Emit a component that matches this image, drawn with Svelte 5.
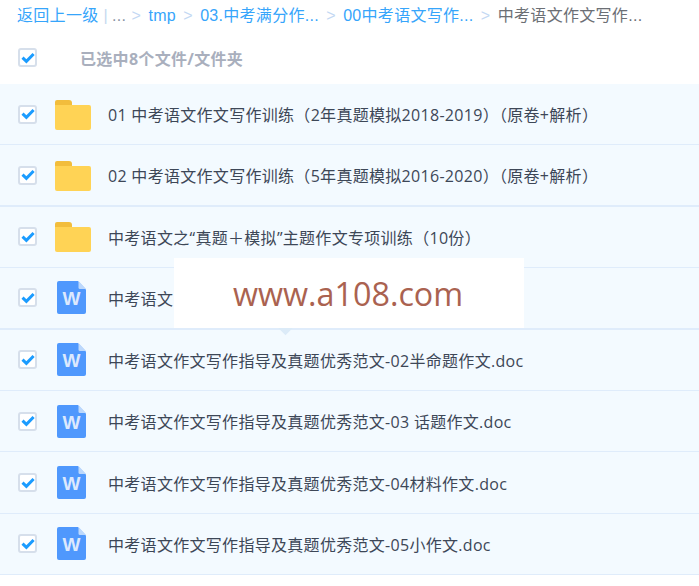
<script>
  const folder = 'folder', doc = 'doc';
  const rows = [
    { type: folder, name: '01 中考语文作文写作训练（2年真题模拟2018-2019）（原卷+解析）' },
    { type: folder, name: '02 中考语文作文写作训练（5年真题模拟2016-2020）（原卷+解析）' },
    { type: folder, name: '中考语文之“真题＋模拟”主题作文专项训练（10份）' },
    { type: doc, name: '中考语文' },
    { type: doc, name: '中考语文作文写作指导及真题优秀范文-02半命题作文.doc' },
    { type: doc, name: '中考语文作文写作指导及真题优秀范文-03 话题作文.doc' },
    { type: doc, name: '中考语文作文写作指导及真题优秀范文-04材料作文.doc' },
    { type: doc, name: '中考语文作文写作指导及真题优秀范文-05小作文.doc' }
  ];
  const crumbs = ['tmp', '03.中考满分作...', '00中考语文写作...'];
</script>

{#snippet check()}
  <span class="check">
    <svg width="14" height="12" viewBox="0 0 14 12"><path d="M1.500 5.600 5.400 9.400 12.600 2" fill="none" stroke="#1b9cff" stroke-width="3"/></svg>
  </span>
{/snippet}

<div class="page">
  <nav class="crumbs">
    <span class="link">返回上一级</span>
    <span class="bar">|</span>
    <span class="dots">...</span>
    {#each crumbs as c}
      <span class="sep">&gt;</span>
      <span class="link">{c}</span>
    {/each}
    <span class="sep">&gt;</span>
    <span class="current">中考语文作文写作...</span>
  </nav>

  <div class="selected">
    {@render check()}
    <span class="count">已选中8个文件/文件夹</span>
  </div>

  <ul class="list">
    {#each rows as r}
      <li class="row">
        {@render check()}
        <span class="icon">
          {#if r.type === folder}
            <svg width="36" height="31" viewBox="0 0 36 31">
              <path d="M0 3a2 2 0 0 1 2-2h12a3 3 0 0 1 3 3v3H0z" fill="#f2bd3c"/>
              <path d="M0 6h34a2 2 0 0 1 2 2v21a2 2 0 0 1-2 2H2a2 2 0 0 1-2-2z" fill="#ffd355"/>
            </svg>
          {:else}
            <svg class="docicon" width="29" height="33" viewBox="0 0 29 33">
              <path d="M2 0h19l8 8.500v22.500a2 2 0 0 1-2 2H2a2 2 0 0 1-2-2V2a2 2 0 0 1 2-2z" fill="#4f98fd"/>
              <path d="M21.500 0 29 8h-6a1.500 1.500 0 0 1-1.500-1.500z" fill="#bcd8fc"/>
              <text x="14.500" y="24" text-anchor="middle" class="w">W</text>
            </svg>
          {/if}
        </span>
        <span class="name">{r.name}</span>
      </li>
    {/each}
  </ul>

  <div class="pointer"></div>
  <div class="mark">www.a108.com</div>
</div>

<style>
  :global(body) {
    margin: 0;
    background: #fff;
  }
  .page {
    position: relative;
    width: 699px;
    height: 586px;
    overflow: hidden;
    font-family: "Open Sans", "Noto Sans CJK SC", sans-serif;
  }
  .crumbs {
    display: flex;
    align-items: baseline;
    box-sizing: border-box;
    height: 31px;
    padding: 5px 0 0 17px;
    font-family: "Liberation Sans", "Noto Sans CJK SC", sans-serif;
    font-size: 16px;
    line-height: 22px;
    letter-spacing: 0.3px;
    white-space: nowrap;
  }
  .link { color: #36a5fb; }
  .bar { color: #c5d9ef; margin: 0 4px 0 5px; }
  .dots { color: #8a94a3; margin-right: -2px; }
  .sep { color: #c3d8f3; margin: 0 7.250px; }
  .current { color: #6c6f75; }
  .selected {
    display: flex;
    align-items: center;
    height: 53px;
    padding-left: 18px;
  }
  .count {
    margin-left: 43px;
    font-size: 16px;
    letter-spacing: 0.3px;
    font-weight: 700;
    color: #a9afbd;
  }
  .check {
    display: flex;
    align-items: center;
    justify-content: center;
    box-sizing: border-box;
    width: 19px;
    height: 19px;
    flex: none;
    background: #fff;
    border: 2px solid #d6dfeb;
    border-radius: 3px;
  }
  .list {
    list-style: none;
    margin: 0;
    padding: 0;
  }
  .row {
    display: flex;
    align-items: center;
    box-sizing: border-box;
    height: 61.400px;
    padding-left: 18px;
    background: #f3faff;
    border-bottom: 1px solid #dfecfb;
  }
  .row:nth-child(2),
  .row:nth-child(4) {
    border-bottom-width: 2px;
  }
  .icon {
    display: flex;
    width: 36px;
    margin-left: 18px;
    flex: none;
  }
  .docicon {
    margin-left: 2px;
  }
  .name {
    margin-left: 17px;
    font-size: 16px;
    letter-spacing: 0.3px;
    color: #3d4757;
    white-space: nowrap;
  }
  .w {
    font-family: "Liberation Sans", sans-serif;
    font-size: 19px;
    font-weight: 700;
    fill: #dce9fd;
  }
  .mark {
    position: absolute;
    left: 174px;
    top: 258px;
    width: 350px;
    height: 70px;
    display: flex;
    align-items: center;
    box-sizing: border-box;
    padding: 0 0 1px 59px;
    background: #fff;
    font-family: "Open Sans", sans-serif;
    font-size: 32.300px;
    color: #aa6250;
  }
  .pointer {
    position: absolute;
    left: 279.500px;
    top: 321.500px;
    width: 11px;
    height: 11px;
    background: #dcebf8;
    transform: rotate(45deg);
  }
</style>
